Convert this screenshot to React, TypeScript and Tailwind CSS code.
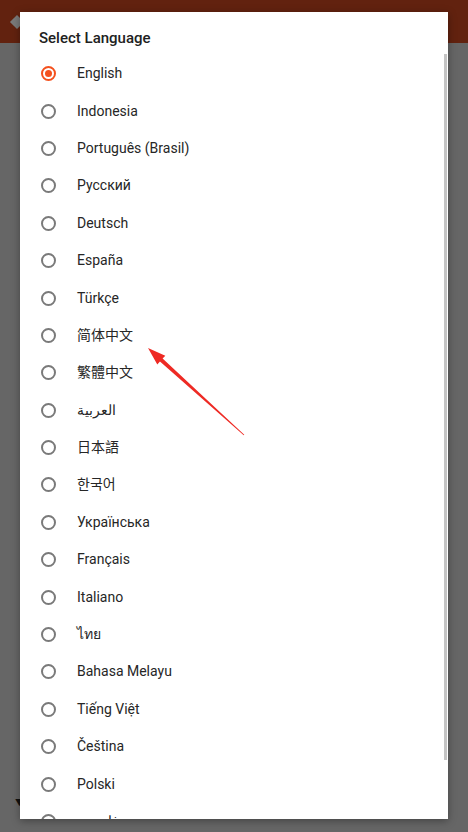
import React from "react";

const languages = [
  "English",
  "Indonesia",
  "Português (Brasil)",
  "Русский",
  "Deutsch",
  "España",
  "Türkçe",
  "简体中文",
  "繁體中文",
  "العربية",
  "日本語",
  "한국어",
  "Українська",
  "Français",
  "Italiano",
  "ไทย",
  "Bahasa Melayu",
  "Tiếng Việt",
  "Čeština",
  "Polski",
  "فارسی",
];

const Radio: React.FC<{ checked: boolean }> = ({ checked }) => (
  <span
    className={`w-[15px] h-[15px] rounded-full border-2 flex items-center justify-center shrink-0 ${
      checked ? "border-[#f4511e]" : "border-[#7a7a7a]"
    }`}
  >
    {checked && <span className="w-[7px] h-[7px] rounded-full bg-[#f4511e]" />}
  </span>
);

const App: React.FC = () => {
  const selected = "English";

  return (
    <div
      className="relative w-[468px] h-[832px] overflow-hidden bg-[#666666]"
      style={{ fontFamily: "Roboto, 'Noto Sans', 'Noto Sans CJK SC', sans-serif" }}
    >
      {/* dimmed app behind the dialog */}
      <div className="h-[43px] bg-[#62220f] flex items-center pl-[12px]">
        <span className="w-[10px] h-[10px] rotate-45 bg-[#7a7a7a]" />
      </div>
      <div className="absolute left-[15px] top-[799px] text-[9px] leading-none text-[#111]">▼</div>

      {/* dialog */}
      <div className="absolute left-[20px] top-[12px] w-[428px] h-[807px] bg-white overflow-hidden shadow-[0_2px_8px_rgba(0,0,0,0.35)]">
        <div className="h-[43px] pt-[16px] pl-[19px] text-[15px] leading-[20px] font-medium text-[#212121]">
          Select Language
        </div>
        <ul>
          {languages.map((lang) => (
            <li key={lang} className="h-[37.4px] flex items-center pl-[21px] gap-[21px]">
              <Radio checked={lang === selected} />
              <span className="text-[14px] text-[#262626]">{lang}</span>
            </li>
          ))}
        </ul>
        <div className="absolute right-[1px] top-[42px] w-[3px] h-[706px] bg-[#c4c4c4]" />
      </div>

      {/* annotation arrow */}
      <svg className="absolute left-0 top-0 pointer-events-none" width="468" height="832">
        <polygon
          points="148,348 165.3,355.7 162.6,358.6 244.3,434.7 243.7,435.3 159.96,361.6 157.3,364.5"
          fill="#ee2a24"
        />
      </svg>
    </div>
  );
};

export default App;
